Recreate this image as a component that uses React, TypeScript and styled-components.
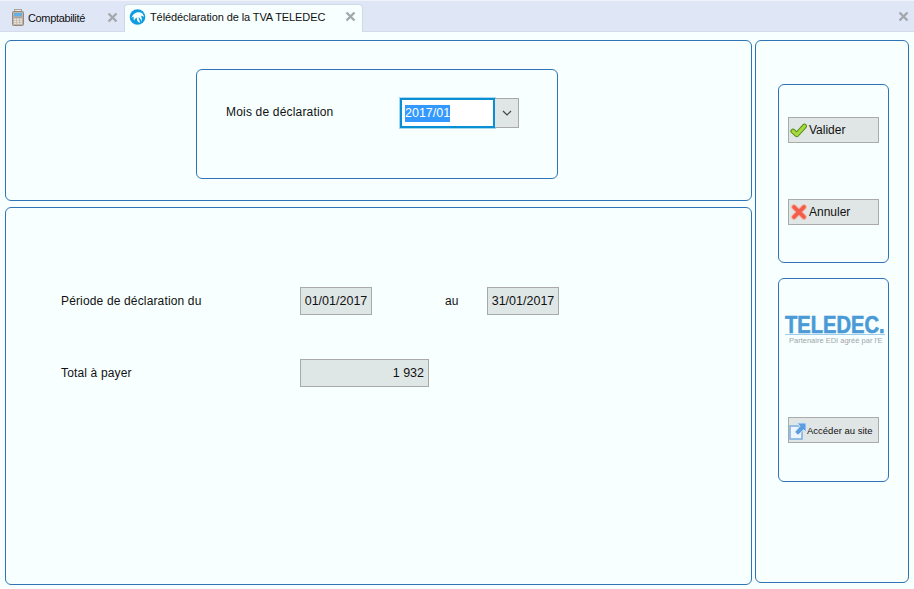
import React from "react";
import styled, { createGlobalStyle } from "styled-components";

const Global = createGlobalStyle`
  html, body { margin: 0; padding: 0; background: #f7ffff; }
  body { font-family: "Liberation Sans", Arial, sans-serif; font-size: 12px; color: #111; }
  #root { width: 914px; height: 589px; overflow: hidden; }
`;

const Page = styled.div`
  width: 914px;
  height: 589px;
  display: flex;
  flex-direction: column;
  background: #f7ffff;
`;

const TabBar = styled.div`
  height: 32px;
  box-sizing: border-box;
  display: flex;
  align-items: flex-end;
  padding-left: 2px;
  background: #dfe6f6;
  border-top: 1px solid #f0f3fa;
  border-bottom: 1px solid #d4dcec;
  position: relative;
`;

const Tab = styled.div<{ $active?: boolean; $w: number }>`
  width: ${(p) => p.$w}px;
  height: ${(p) => (p.$active ? 28 : 27)}px;
  box-sizing: border-box;
  display: flex;
  align-items: center;
  gap: ${(p) => (p.$active ? 4 : 3)}px;
  padding: ${(p) => (p.$active ? "0 6px 4px 4px" : "0 5px 3px 8px")};
  margin-bottom: -1px;
  background: ${(p) => (p.$active ? "#f7ffff" : "transparent")};
  border-radius: 4px 4px 0 0;
  border: 1px solid ${(p) => (p.$active ? "#d0d8e8" : "transparent")};
  border-bottom: none;
  font-size: 11px;
  letter-spacing: ${(p) => (p.$active ? "-0.1px" : "-0.35px")};
  white-space: nowrap;
`;

const TabLabel = styled.span`
  flex: 1;
  color: #111;
`;

const CloseGlyph = styled.svg`
  width: 11px;
  height: 11px;
  flex: none;
`;

const BarClose = styled(CloseGlyph)`
  position: absolute;
  right: 5px;
  top: 10px;
`;

const Content = styled.div`
  flex: 1;
  display: grid;
  grid-template-columns: 747px 154px;
  column-gap: 3px;
  padding: 8px 0 4px 5px;
`;

const LeftColumn = styled.div`
  display: grid;
  grid-template-rows: 161px 378px;
  row-gap: 6px;
`;

const Panel = styled.section`
  box-sizing: border-box;
  border: 1px solid #2f74b5;
  border-radius: 6px;
  background: #f7ffff;
`;

const TopPanel = styled(Panel)`
  padding: 28px 0 0 190px;
`;

const MonthBox = styled(Panel)`
  width: 362px;
  height: 110px;
  padding: 28px 0 0 29px;
  display: flex;
  align-items: flex-start;
`;

const MonthLabel = styled.div`
  width: 174px;
  padding-top: 7px;
  letter-spacing: 0.18px;
`;

const Combo = styled.div`
  display: flex;
  height: 30px;
`;

const ComboInput = styled.div`
  width: 95px;
  height: 30px;
  box-sizing: border-box;
  border: 2px solid #0a8fd4;
  outline: 1px solid #a8d8ee;
  outline-offset: 0;
  background: #fff;
  padding: 5px 0 0 3px;
  font-size: 12.5px;
`;

const Selected = styled.span`
  display: inline-block;
  background: #3399ff;
  color: #fff;
  line-height: 17px;
`;

const ComboButton = styled.div`
  width: 24px;
  height: 30px;
  box-sizing: border-box;
  border: 1px solid #a9a9a9;
  border-left: none;
  background: #e0e6e6;
  display: flex;
  align-items: center;
  justify-content: center;
`;

const BottomPanel = styled(Panel)`
  padding: 79px 0 0 55px;
  display: flex;
  flex-direction: column;
  gap: 44px;
`;

const FormRow = styled.div`
  display: flex;
  align-items: center;
  height: 28px;
`;

const FieldLabel = styled.div`
  width: 239px;
  letter-spacing: 0.15px;
`;

const AuLabel = styled.div`
  width: 115px;
  padding-left: 73px;
  box-sizing: border-box;
`;

const ReadField = styled.div<{ $w: number; $right?: boolean }>`
  width: ${(p) => p.$w}px;
  height: 28px;
  box-sizing: border-box;
  border: 1px solid #a9a9a9;
  background: #dfe6e6;
  display: flex;
  align-items: center;
  justify-content: ${(p) => (p.$right ? "flex-end" : "center")};
  padding-right: ${(p) => (p.$right ? 4 : 0)}px;
  font-size: 12.5px;
`;

const RightPanel = styled(Panel)`
  height: 543px;
  padding: 43px 0 0 22px;
  display: flex;
  flex-direction: column;
  gap: 15px;
`;

const SideBox = styled(Panel)<{ $h: number }>`
  width: 111px;
  height: ${(p) => p.$h}px;
  display: flex;
  flex-direction: column;
  align-items: flex-start;
  padding: 32px 0 0 9px;
  flex: none;
`;

const LogoBox = styled(SideBox)`
  padding-top: 36px;
`;

const ActionButton = styled.div<{ $small?: boolean }>`
  width: 91px;
  height: 26px;
  box-sizing: border-box;
  border: 1px solid #aaa;
  background: #e0e6e6;
  display: flex;
  align-items: center;
  gap: ${(p) => (p.$small ? 0 : 2)}px;
  padding-left: ${(p) => (p.$small ? 0 : 1)}px;
  font-size: ${(p) => (p.$small ? 9.5 : 12)}px;
  white-space: nowrap;
`;

const ButtonGap = styled.div`
  height: 56px;
  flex: none;
`;

const Logo = styled.div`
  width: 100px;
  margin-left: -3px;
  display: flex;
  flex-direction: column;
  height: 32px;
`;

const LogoMark = styled.div`
  height: 20px;
  box-sizing: border-box;
  border-bottom: 1px solid #9fcde8;
`;

const LogoWord = styled.div`
  font-weight: 700;
  font-size: 23px;
  line-height: 20px;
  white-space: nowrap;
  transform: scaleX(0.875);
  transform-origin: left center;
  -webkit-text-stroke: 0.6px currentColor;
  color: #4a9ad6;
`;

const LogoTag = styled.div`
  font-size: 7.5px;
  line-height: 11px;
  padding-left: 4px;
  color: #a2a6aa;
  white-space: nowrap;
`;

const LogoGap = styled.div`
  height: 70px;
  flex: none;
`;

const IconSvg = styled.svg`
  flex: none;
`;

const CrossSvg = styled(IconSvg)`
  margin-left: 1px;
`;

const X = () => (
  <CloseGlyph viewBox="0 0 11 11">
    <path d="M1.5 1.5 9.5 9.5M9.5 1.5 1.5 9.5" stroke="#a4a8ac" strokeWidth="2.4" />
  </CloseGlyph>
);

const CalcIcon = () => (
  <IconSvg width="14" height="17" viewBox="0 0 14 17">
    <rect x="3.5" y="0.5" width="7" height="3" fill="#eceae6" stroke="#a8a29a" />
    <rect x="1.5" y="2.5" width="11" height="14" rx="1" fill="#bdb3a8" stroke="#93897e" />
    <rect x="3" y="4" width="8" height="3" fill="#62b0e6" />
    <rect x="3" y="7.6" width="8" height="1" fill="#8fa0ac" />
    {[9.6, 11.6, 13.6].map((y) =>
      [3, 5.9, 8.8].map((x) => <rect key={`${x}-${y}`} x={x} y={y} width="2.2" height="1.3" fill="#efe6da" />)
    )}
  </IconSvg>
);

const PalmIcon = () => (
  <IconSvg width="17" height="16" viewBox="0 0 17 16">
    <circle cx="8.5" cy="8" r="7.8" fill="#0f9be0" />
    <path d="M2.5 9C3.5 5 7 3 10.5 3.2 13 3.4 14.8 5.4 15 8 14 7.2 13 6.8 12 6.8 12.8 8.6 13 10.4 12.6 12.4 11.8 10.4 10.8 9 9.6 8 9.8 10 10.4 12 11.4 13.6 9 13.6 7.6 11.4 7.8 8.4 6.6 9 5.6 10.2 5.2 11.6 4.4 10 4.4 8.6 5 7.4 4.2 7.6 3.2 8.2 2.5 9Z" fill="#f7ffff" />
  </IconSvg>
);

const CheckIcon = () => (
  <IconSvg width="17" height="15" viewBox="0 0 17 15">
    <path d="M3 8.2 6.8 11.6 14.4 3.2" fill="none" stroke="#4f8a14" strokeWidth="5" strokeLinejoin="round" strokeLinecap="round" />
    <path d="M3 8.2 6.8 11.6 14.4 3.2" fill="none" stroke="#a8d83e" strokeWidth="3.2" strokeLinejoin="round" strokeLinecap="round" />
  </IconSvg>
);

const CrossIcon = () => (
  <CrossSvg width="16" height="16" viewBox="0 0 16 16">
    <path d="M3 3 13 13M13 3 3 13" stroke="#f8a899" strokeWidth="5.4" strokeLinecap="round" />
    <path d="M3 3 13 13M13 3 3 13" stroke="#f25c4a" strokeWidth="3.6" strokeLinecap="round" />
  </CrossSvg>
);

const LinkIcon = () => (
  <IconSvg width="18" height="19" viewBox="0 0 18 19">
    <rect x="1" y="5" width="12" height="13" fill="#eef6fd" stroke="#7fb2e2" strokeWidth="1.6" />
    <path d="M8 2H17V11L14.6 8.8 9 14 5.8 11 11 5.2Z" fill="#5a9ee0" stroke="#cfe3f7" strokeWidth="1" strokeLinejoin="round" />
  </IconSvg>
);

export default function App() {
  return (
    <Page>
      <Global />
      <TabBar>
        <Tab $w={122}>
          <CalcIcon />
          <TabLabel>Comptabilité</TabLabel>
          <X />
        </Tab>
        <Tab $active $w={239}>
          <PalmIcon />
          <TabLabel>Télédéclaration de la TVA TELEDEC</TabLabel>
          <X />
        </Tab>
        <BarClose viewBox="0 0 11 11">
          <path d="M1.5 1.5 9.5 9.5M9.5 1.5 1.5 9.5" stroke="#a4a8ac" strokeWidth="2.4" />
        </BarClose>
      </TabBar>
      <Content>
        <LeftColumn>
          <TopPanel>
            <MonthBox>
              <MonthLabel>Mois de déclaration</MonthLabel>
              <Combo>
                <ComboInput>
                  <Selected>2017/01</Selected>
                </ComboInput>
                <ComboButton>
                  <svg width="10" height="6" viewBox="0 0 10 6">
                    <path d="M1 1 5 5 9 1" fill="none" stroke="#444" strokeWidth="1.2" />
                  </svg>
                </ComboButton>
              </Combo>
            </MonthBox>
          </TopPanel>
          <BottomPanel>
            <FormRow>
              <FieldLabel>Période de déclaration du</FieldLabel>
              <ReadField $w={72}>01/01/2017</ReadField>
              <AuLabel>au</AuLabel>
              <ReadField $w={72}>31/01/2017</ReadField>
            </FormRow>
            <FormRow>
              <FieldLabel>Total à payer</FieldLabel>
              <ReadField $w={129} $right>1 932</ReadField>
            </FormRow>
          </BottomPanel>
        </LeftColumn>
        <RightPanel>
          <SideBox $h={179}>
            <ActionButton>
              <CheckIcon />
              Valider
            </ActionButton>
            <ButtonGap />
            <ActionButton>
              <CrossIcon />
              Annuler
            </ActionButton>
          </SideBox>
          <LogoBox $h={204}>
            <Logo>
              <LogoMark>
                <LogoWord>TELEDEC.</LogoWord>
              </LogoMark>
              <LogoTag>Partenaire EDI agréé par l'E</LogoTag>
            </Logo>
            <LogoGap />
            <ActionButton $small>
              <LinkIcon />
              Accéder au site
            </ActionButton>
          </LogoBox>
        </RightPanel>
      </Content>
    </Page>
  );
}
